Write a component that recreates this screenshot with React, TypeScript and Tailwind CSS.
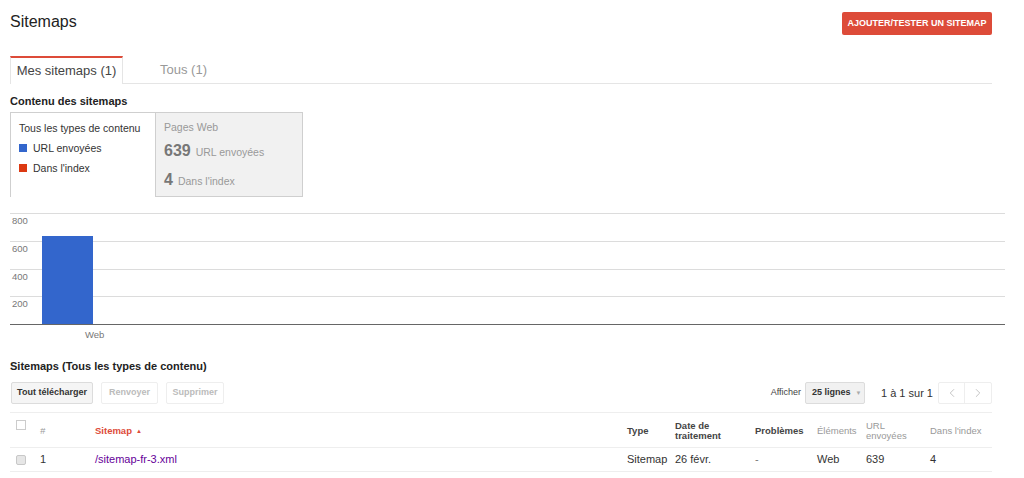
import { ChevronLeft, ChevronRight } from "lucide-react";

const gridLines = [
  { y: 7, label: "800" },
  { y: 35, label: "600" },
  { y: 63, label: "400" },
  { y: 90, label: "200" },
];

const Chart = () => {
  return (
    <svg width="995" height="136" className="block">
      {gridLines.map((g) => (
        <g key={g.label}>
          <line x1="0" x2="995" y1={g.y + 0.5} y2={g.y + 0.5} stroke="#dcdcdc" strokeWidth="1" />
          <text x="2" y={g.y + 11} fontSize="9.5" fill="#777" fontFamily="Liberation Sans, Arial, sans-serif">
            {g.label}
          </text>
        </g>
      ))}
      <rect x="32" y="30" width="51" height="88" fill="#3366cc" />
      <line x1="0" x2="995" y1="118.5" y2="118.5" stroke="#666" strokeWidth="1.2" />
      <text x="75" y="132" fontSize="9.5" fill="#777" fontFamily="Liberation Sans, Arial, sans-serif">
        Web
      </text>
    </svg>
  );
};

const cols = "grid grid-cols-[25px_55px_532px_48px_80px_62px_49px_64px_67px]";

export default function App() {
  return (
    <div className="w-[1024px] h-[478px] overflow-hidden bg-white pl-[10px] font-['Liberation_Sans',Arial,sans-serif] text-[#222]">
      {/* Header */}
      <div className="flex w-[982px] items-start justify-between pt-[10px]">
        <h1 className="pt-[2px] text-[16px] leading-[20px] font-normal">Sitemaps</h1>
        <button className="mt-[2px] h-[23px] w-[150px] rounded-[2px] bg-[#dd4b39] text-[9px] font-bold text-white uppercase">
          Ajouter/tester un sitemap
        </button>
      </div>

      {/* Tabs */}
      <div className="mt-[21px] flex h-[28px] w-[982px] items-stretch border-b border-[#e5e5e5]">
        <div className="-mb-px flex w-[113px] items-center justify-center border-x border-t-2 border-[#e5e5e5] border-t-[#dd4b39] bg-white text-[13px] text-[#444]">
          Mes sitemaps (1)
        </div>
        <div className="flex items-center pl-[37px] text-[13px] text-[#999]">Tous (1)</div>
      </div>

      <div className="mt-[10px] text-[11px] leading-[14px] font-bold text-[#222]">Contenu des sitemaps</div>

      {/* Content type panels */}
      <div className="mt-[4px] flex h-[85px] w-[293px]">
        <div className="w-[145px] border-l border-t border-[#cfcfcf] bg-white pl-[8px] pt-[8px] text-[10.5px] text-[#333]">
          <div className="leading-[14px]">Tous les types de contenu</div>
          <div className="mt-[6px] flex items-center gap-[6px] leading-[14px]">
            <span className="h-[8px] w-[8px] bg-[#3366cc]" />
            URL envoyées
          </div>
          <div className="mt-[6px] flex items-center gap-[6px] leading-[14px]">
            <span className="h-[8px] w-[8px] bg-[#dc3912]" />
            Dans l'index
          </div>
        </div>
        <div className="w-[148px] border border-[#cfcfcf] bg-[#f1f1f1] pl-[8px] pt-[7px] text-[10.5px] text-[#999]">
          <div className="leading-[14px]">Pages Web</div>
          <div className="mt-[5px] flex items-baseline gap-[5px]">
            <span className="text-[16px] font-bold text-[#777]">639</span>
            <span>URL envoyées</span>
          </div>
          <div className="mt-[5px] flex items-baseline gap-[5px]">
            <span className="text-[16px] font-bold text-[#777]">4</span>
            <span>Dans l'index</span>
          </div>
        </div>
      </div>

      {/* Chart */}
      <div className="mt-[9px]">
        <Chart />
      </div>

      <div className="mt-[17px] text-[11px] leading-[14px] font-bold text-[#222]">
        Sitemaps (Tous les types de contenu)
      </div>

      {/* Toolbar */}
      <div className="mt-[9px] flex w-[982px] items-center">
        <button className="ml-px h-[22px] w-[82px] rounded-[2px] border border-[#dcdcdc] bg-[#f5f5f5] text-[9px] font-bold text-[#333]">
          Tout télécharger
        </button>
        <button className="ml-[8px] h-[22px] w-[57px] rounded-[2px] border border-[#eee] bg-white text-[9px] font-bold text-[#bbb]">
          Renvoyer
        </button>
        <button className="ml-[8px] h-[22px] w-[58px] rounded-[2px] border border-[#eee] bg-white text-[9px] font-bold text-[#bbb]">
          Supprimer
        </button>
        <div className="ml-auto flex items-center">
          <span className="text-[9px] text-[#444]">Afficher</span>
          <div className="ml-[4px] flex h-[22px] w-[60px] items-center gap-[5px] whitespace-nowrap rounded-[2px] border border-[#dcdcdc] bg-[#f1f1f1] pl-[6px] text-[9px] font-bold text-[#333]">
            25 lignes
            <span className="text-[6px] text-[#aaa]">▼</span>
          </div>
          <span className="ml-[16px] text-[11px] text-[#333]">1 à 1 sur 1</span>
          <div className="ml-[5px] flex h-[22px] rounded-[2px] border border-[#eee]">
            <div className="flex w-[26px] items-center justify-center border-r border-[#eee] text-[#bbb]">
              <ChevronLeft size={14} strokeWidth={1.5} />
            </div>
            <div className="flex w-[26px] items-center justify-center text-[#bbb]">
              <ChevronRight size={14} strokeWidth={1.5} />
            </div>
          </div>
        </div>
      </div>

      {/* Table */}
      <div className="mt-[8px] w-[982px] border-t border-[#eee] text-[11px]">
        <div className={`${cols} h-[35px] border-b border-[#eee] text-[9.5px]`}>
          <div className="pl-[6px] pt-[7px]">
            <span className="block h-[10px] w-[10px] border border-[#ccc] bg-white" />
          </div>
          <div className="flex items-center pl-[5px] pt-[2px] italic text-[#999]">#</div>
          <div className="flex items-center pl-[5px] pt-[2px] font-bold text-[#dd4b39]">
            Sitemap <span className="ml-[4px] text-[6px]">▲</span>
          </div>
          <div className="flex items-center pl-[5px] pt-[2px] font-bold text-[#444]">Type</div>
          <div className="flex items-center pl-[5px] pt-[2px] leading-[10px] font-bold text-[#444]">
            Date de
            <br />
            traitement
          </div>
          <div className="flex items-center pl-[5px] pt-[2px] font-bold text-[#444]">Problèmes</div>
          <div className="flex items-center pl-[5px] pt-[2px] text-[#999]">Éléments</div>
          <div className="flex items-center pl-[5px] pt-[2px] leading-[10px] text-[#999]">
            URL
            <br />
            envoyées
          </div>
          <div className="flex items-center pl-[5px] pt-[2px] text-[#999]">Dans l'index</div>
        </div>
        <div className={`${cols} h-[24px] items-center border-b border-[#eee] text-[#333]`}>
          <div className="pl-[6px]">
            <span className="block h-[10px] w-[10px] rounded-[2px] border border-[#c8c8c8] bg-[#e6e6e6]" />
          </div>
          <div className="pl-[5px]">1</div>
          <div className="pl-[5px] text-[#660099]">/sitemap-fr-3.xml</div>
          <div className="pl-[5px]">Sitemap</div>
          <div className="pl-[5px]">26 févr.</div>
          <div className="pl-[5px] text-[#777]">-</div>
          <div className="pl-[5px]">Web</div>
          <div className="pl-[5px]">639</div>
          <div className="pl-[5px]">4</div>
        </div>
      </div>
    </div>
  );
}
